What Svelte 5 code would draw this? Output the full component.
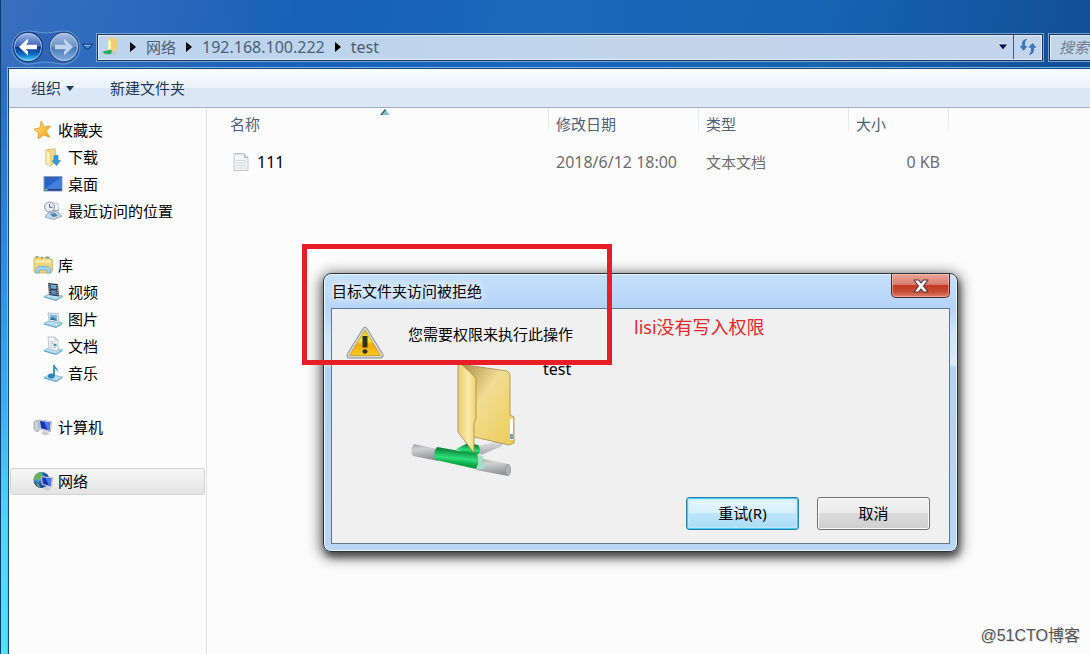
<script>
  const groups = [
    { icon: 'star', label: '收藏夹', items: [
      { icon: 'download', label: '下载' },
      { icon: 'desktop', label: '桌面' },
      { icon: 'recent', label: '最近访问的位置' }
    ] },
    { icon: 'library', label: '库', items: [
      { icon: 'video', label: '视频' },
      { icon: 'picture', label: '图片' },
      { icon: 'document', label: '文档' },
      { icon: 'music', label: '音乐' }
    ] },
    { icon: 'computer', label: '计算机', items: [] },
    { icon: 'network', label: '网络', items: [], selected: true }
  ];
  const crumbs = [{ label: '网络' }, { label: '192.168.100.222', latin: true }, { label: 'test', latin: true }];
  const files = [{ name: '111', date: '2018/6/12 18:00', type: '文本文档', size: '0 KB' }];
</script>

{#snippet tray()}
  <path d="M1 14.5 7 11.5 19.5 14 13 18Z" fill="#b9def0" stroke="#79b4d2" stroke-width=".8" />
  <path d="M1 14.5 13 18 19.5 14V15L13 19 1 15.5Z" fill="#5fa3c8" />
{/snippet}

{#snippet monitor()}
  <path d="M6 3 18.5 4.5 17.5 15 7 12Z" fill="#e3e8ee" stroke="#9aa4b4" stroke-width=".7" />
  <path d="M7 4 17.3 5.4 16.5 13.6 8 11.3Z" fill="#1732b4" />
  <path d="M11 4.6 17.3 5.4 16.5 13.6 14.5 13Z" fill="#5377e4" />
  <path d="M10 14 14 15 17 17 12 18.5 8 16.5Z" fill="#c6ccd4" />
{/snippet}

{#snippet icon(name)}
  <svg class="icon" viewBox="0 0 20 20" aria-hidden="true">
    {#if name === 'star'}
      <path d="M8.2 1 11 7.2 17.5 6 13.2 11.2 16.8 17.2 10.4 15 5.2 19 5.4 12.8 1 9.2 7 7.8Z" fill="url(#gold)" stroke="#e89a2c" stroke-width=".9" stroke-linejoin="round" />
    {:else if name === 'download'}
      <path d="M3 3 12 1.5 13.5 15 9 18 3 17Z" fill="#f0d88a" stroke="#c9a952" stroke-width=".6" />
      <path d="M3 3 7 5 8 19 3 17Z" fill="#fff1b8" stroke="#d4b860" stroke-width=".6" />
      <path d="M11 8.5H15V13.5H17.5L13.5 18.5 9.3 13.8H11Z" fill="#2f9be0" stroke="#2479bb" stroke-width=".6" />
    {:else if name === 'desktop'}
      <rect x="1" y="2.5" width="18" height="14.5" fill="#2b62c8" stroke="#8aa0bd" />
      <path d="M1.5 15 18.5 3V15Z" fill="#4f8ae6" opacity=".7" />
      <path d="M1.5 15H18.5V16.5H1.5Z" fill="#1c3f86" />
      <rect x="1.5" y="15" width="3" height="1.5" fill="#6dc37e" />
    {:else if name === 'recent'}
      <path d="M7 1.5 15 2.5 16 13 8 13Z" fill="#eef2f6" stroke="#a8b5c2" stroke-width=".7" />
      <circle cx="6.5" cy="6" r="5" fill="#e7edf2" stroke="#8798a8" />
      <path d="M6.5 3V6.3H9.5" fill="none" stroke="#4e6980" />
      <path d="M5 12 13 10.5 19 15 11 18.5 2 16Z" fill="#c6dcea" stroke="#6d8fa8" stroke-width=".7" />
      <path d="M7 13 12 12 15 15 10 16Z" fill="#4b83a4" />
      <path d="M10 10 16 9" stroke="#8ba0b0" />
    {:else if name === 'library'}
      <path d="M1 4 2 2H6L7 3H11L12 2H16L17 4 19.5 4.5V16L18 18H2L1 16Z" fill="#ecd57c" stroke="#c9aa50" stroke-width=".7" />
      <path d="M2 5H18V8H2Z" fill="#f6e8a6" />
      <path d="M3 2H5" stroke="#5cac4e" stroke-width="1.5" /><path d="M8 2.5H9.5" stroke="#ce5140" stroke-width="1.5" /><path d="M13 2.5H16" stroke="#4d9bce" stroke-width="1.5" />
      <path d="M3 18V13.5L5.5 11.5H15L17.5 13.5V18H14V15H6.5V18Z" fill="#9fd3ea" stroke="#6ca8c4" stroke-width=".7" />
    {:else if name === 'video'}
      {@render tray()}
      <path d="M5 1 15 2 16 14.5 6 13Z" fill="#333b48" />
      <path d="M7.5 2.5 13 3 13.3 7 7.8 6.5Z" fill="#6caadd" /><path d="M8 8 13.4 8.5 13.7 13 8.3 12.3Z" fill="#5689b8" />
      <path d="M6 2 7 13M14 3 15 14" stroke="#dce4e9" stroke-dasharray="1 1.3" />
    {:else if name === 'picture'}
      {@render tray()}
      <path d="M5 4 15 4.5 16 13.5 6 12Z" fill="#eff7fc" stroke="#85a9bf" stroke-width=".7" />
      <path d="M6.5 5.5 13.8 6 14.4 11.8 7.2 10.7Z" fill="#76b6dc" /><path d="M7 9.5 10 8 14.4 11.8 7.2 10.7Z" fill="#356f99" />
    {:else if name === 'document'}
      {@render tray()}
      <path d="M5 1H12L15 4V15L6 13Z" fill="#f6f9fb" stroke="#a2afbb" stroke-width=".7" />
      <path d="M12 1V4H15" fill="#dbe5ec" stroke="#a2afbb" stroke-width=".6" />
      <path d="M7 5 12 6M7 7 10 7.5M7 9 9 9.4M7 11 13 12" stroke="#a3b6c6" stroke-width=".8" /><path d="M10.5 7.5 13.5 8V10.5L10.5 10Z" fill="#5789b8" />
    {:else if name === 'music'}
      {@render tray()}
      <path d="M11 2V13" stroke="#2977a8" stroke-width="1.6" /><path d="M11 1C11.5 4 16 5 14.5 9 14 6.5 12.5 6 11 5.5Z" fill="#3794ca" />
      <ellipse cx="8.3" cy="13" rx="3.4" ry="2.5" fill="#2985be" />
    {:else if name === 'computer'}
      <path d="M1 5 3 3.5 6 4V14L3 14.5 1 12Z" fill="#cbd2da" stroke="#8d98a4" stroke-width=".7" />
      {@render monitor()}
    {:else}
      <circle cx="8.5" cy="9" r="8" fill="url(#globe)" />
      <path d="M3 4C5 1.5 8 1 10 1.5L8 4 9 6 6 9 3 8 1 10C.8 7 1.5 5.5 3 4ZM3 12 6 13 7 16.5C5 16 3.5 14 3 12Z" fill="#64b34e" />
      <g transform="translate(2.5 2.5) scale(.92)">{@render monitor()}</g>
    {/if}
  </svg>
{/snippet}

<svg class="defs" aria-hidden="true">
  <defs>
    <linearGradient id="gold" x2="1" y2="1"><stop stop-color="#fff0a0" /><stop offset=".5" stop-color="#fbc544" /><stop offset="1" stop-color="#f39a2e" /></linearGradient>
    <radialGradient id="globe" cx=".3" cy=".3"><stop stop-color="#a6e0f2" /><stop offset=".6" stop-color="#3784c5" /><stop offset="1" stop-color="#1c4b96" /></radialGradient>
    <linearGradient id="back" x2="0" y2="1"><stop stop-color="#a5bce8" /><stop offset=".48" stop-color="#3b62b8" /><stop offset=".5" stop-color="#0b3586" /><stop offset=".75" stop-color="#0c6cc4" /><stop offset="1" stop-color="#4be0fb" /></linearGradient>
    <linearGradient id="forward" x2="0" y2="1"><stop stop-color="#a9bfe0" /><stop offset=".5" stop-color="#6b91c7" /><stop offset=".52" stop-color="#4a78b8" /><stop offset="1" stop-color="#82b0e2" /></linearGradient>
    <linearGradient id="leaf" x2="1" y2="0"><stop stop-color="#e9cb73" /><stop offset=".6" stop-color="#fcebaa" /><stop offset="1" stop-color="#ecd06f" /></linearGradient>
    <linearGradient id="folder" x2="1" y2="1"><stop stop-color="#a78d48" /><stop offset=".2" stop-color="#c9b068" /><stop offset=".42" stop-color="#f1dc93" /><stop offset="1" stop-color="#eccd57" /></linearGradient>
    <linearGradient id="pipe" x2=".2" y2="1"><stop stop-color="#9fa2a5" /><stop offset=".35" stop-color="#cfd1d3" /><stop offset="1" stop-color="#909396" /></linearGradient>
    <linearGradient id="green" x2="-.2" y2="1"><stop stop-color="#087c35" /><stop offset=".4" stop-color="#2fe07a" /><stop offset=".6" stop-color="#0cae4a" /><stop offset="1" stop-color="#046d2b" /></linearGradient>
    <linearGradient id="warn" x2="0" y2="1"><stop stop-color="#d8c636" /><stop offset=".4" stop-color="#f8ec3c" /><stop offset=".58" stop-color="#f0a90e" /><stop offset="1" stop-color="#fbcb20" /></linearGradient>
  </defs>
</svg>

<div class="window">
  <header>
    <div class="history">
      <svg class="pill" viewBox="0 0 68 34" aria-hidden="true"><path d="M17 1C24 1 27 3 34 3S44 1 51 1A16 16 0 0 1 51 33C44 33 41 31 34 31S24 33 17 33A16 16 0 0 1 17 1Z" fill="#2a5eae" fill-opacity=".5" stroke="#8db5e6" stroke-opacity=".6" /></svg>
      <button aria-label="后退"><svg viewBox="0 0 32 32"><circle cx="16" cy="16" r="14.6" fill="url(#back)" stroke="#173a78" stroke-width="1.2" /><circle cx="16" cy="16" r="13.6" fill="none" stroke="#c6dcf8" stroke-opacity=".7" /><path d="M16 7.5 7 16 16 24.500V20.500L13.800 18.200H25V13.800H13.800L16 11.500Z" fill="#fff" /></svg></button>
      <button aria-label="前进"><svg viewBox="0 0 32 32"><circle cx="16" cy="16" r="14.6" fill="url(#forward)" stroke="#2b4e87" stroke-width="1.2" /><circle cx="16" cy="16" r="13.6" fill="none" stroke="#c9daf0" stroke-opacity=".7" /><path d="M16 7.500 25 16 16 24.500V20.500L18.200 18.200H7V13.800H18.200L16 11.500Z" fill="#bfd3ec" /></svg></button>
      <button class="pages" aria-label="最近的页面"><svg viewBox="0 0 12 8"><path d="M1 1.5H11L7.5 6.5H4.5Z" fill="#3d8adb" stroke="#123a78" stroke-width="1.2" /><path d="M2 2.5H10" stroke="#8fc1f4" /></svg></button>
    </div>
    <nav class="address" aria-label="地址">
      <svg class="place" viewBox="0 0 20 20" aria-hidden="true"><path d="M8 2 11 0 17 2V14L11 15 8 13Z" fill="#e9d17a" /><path d="M8 2 11 4V15L8 13Z" fill="#fff0b4" /><path d="M1 15 6 14 12 13.5 17 17 15 18.5 11 17 4 17.5Z" fill="#bfc6cc" /><path d="M3 14.5 11 12.5 12 15 10 17.5 4 16.5Z" fill="#22ac57" /></svg>
      {#each crumbs as crumb}
        <svg class="sep" viewBox="0 0 6 10" aria-hidden="true"><path d="M0 0 6 5 0 10Z" /></svg>
        <a href="#top" class:latin={crumb.latin}>{crumb.label}</a>
      {/each}
      <button class="drop" aria-label="历史记录"><svg viewBox="0 0 12 8"><path d="M1 1H11L6 7Z" fill="#081050" stroke="#f2f7fc" stroke-width=".8" /></svg></button>
      <button class="refresh" aria-label="刷新"><svg viewBox="0 0 18 16"><path d="M7.500 .5C4 1 2.800 4 3 7H.5L5 12 9.500 7H7C6.500 4.500 6.500 3 9 1Z" fill="#3c78b6" stroke="#eef5fb" stroke-width=".6" /><path d="M10.500 15.500C14 15 15.200 12 15 9H17.500L13 4 8.500 9H11C11.500 11.500 11.500 13 9 15Z" fill="#3c78b6" stroke="#eef5fb" stroke-width=".6" /></svg></button>
    </nav>
    <input class="search" type="text" placeholder="搜索" aria-label="搜索" />
  </header>

  <div class="client">
    <div class="toolbar">
      <button>组织 <svg viewBox="0 0 8 5" aria-hidden="true"><path d="M0 0H8L4 5Z" fill="#1e395b" /></svg></button>
      <button>新建文件夹</button>
    </div>
    <div class="body">
      <aside>
        {#each groups as group}
          <ul>
            <li><a href="#top" class:selected={group.selected}>{@render icon(group.icon)}{group.label}</a></li>
            {#each group.items as item}
              <li><a href="#top" class="child">{@render icon(item.icon)}{item.label}</a></li>
            {/each}
          </ul>
        {/each}
      </aside>
      <main>
        <table>
          <colgroup><col class="c-name" /><col class="c-mid" /><col class="c-mid" /><col class="c-size" /></colgroup>
          <thead>
            <tr>
              <th class="name">名称<svg class="sort" viewBox="0 0 10 6" aria-hidden="true"><path d="M0 6 5 0 10 6Z" fill="#8fc0d6" /><path d="M0 6 5 0 6 1.2 2 6Z" fill="#3b657c" /></svg></th>
              <th>修改日期</th><th>类型</th><th>大小</th>
            </tr>
          </thead>
          <tbody>
            {#each files as file}
              <tr>
                <td class="name latin"><span>
                  <svg viewBox="0 0 16 20" aria-hidden="true"><path d="M1 2H11.5L15 5.5V18.5H1Z" fill="#f1f3f4" stroke="#c3c7ca" /><path d="M11.5 2V5.5H15" fill="#d9dde0" stroke="#9fa6ab" stroke-width=".8" /><path d="M2 1.5H11" stroke="#a0a4a8" stroke-dasharray="1 1.2" /><path d="M3 8.5H13M3 11H13M3 13.5H13M3 16H13" stroke="#d0dde3" /></svg>
                  {file.name}</span></td>
                <td class="latin">{file.date}</td><td>{file.type}</td><td class="size latin">{file.size}</td>
              </tr>
            {/each}
          </tbody>
        </table>
      </main>
    </div>
  </div>

  <div class="dialog" role="dialog" aria-labelledby="dialog-title">
    <div class="title">
      <h1 id="dialog-title">目标文件夹访问被拒绝</h1>
      <button class="close" aria-label="关闭"><svg viewBox="0 0 16 14"><path d="M1 1H5.5L8 4 10.5 1H15L10.5 7 15 13H10.5L8 10 5.5 13H1L5.5 7Z" fill="#f7f7f7" stroke="#4c3a48" stroke-width="1.1" stroke-linejoin="round" /></svg></button>
    </div>
    <div class="panel">
      <div class="message">
        <svg viewBox="0 0 40 34" aria-hidden="true"><path d="M18 3Q20 0 22 3L38 29Q39 32 36 32.500H4Q1 32 2 29Z" fill="#d5d6d8" stroke="#898c90" /><path d="M20 4.500 35.500 30H4.500Z" fill="url(#warn)" stroke="#d19a16" stroke-width=".8" stroke-linejoin="round" /><path d="M17.500 10.500H22.500V22H17.500Z" fill="#32311d" /><ellipse cx="20" cy="26" rx="2.500" ry="2.200" fill="#32311d" /></svg>
        <p>您需要权限来执行此操作</p>
      </div>
      <div class="subject">
        <svg viewBox="0 0 110 118" aria-hidden="true">
          <path d="M69 85 96 79 94 85 73 94Z" fill="url(#pipe)" opacity=".8" />
          <path d="M6 83 30 88V100L5 95Q1 89 6 83Z" fill="url(#pipe)" />
          <path d="M70 97 101 103Q104 109 100 115L68 109Z" fill="url(#pipe)" />
          <ellipse cx="100" cy="109" rx="2.500" ry="5.500" fill="#b2b5b7" stroke="#8e9194" stroke-width=".8" />
          <path d="M48 88 60 82 70 84Q74 89 71 93L66 95Z" fill="url(#green)" />
          <path d="M29 86 69 93Q74 100 68 108L28 99Q24 92 29 86Z" fill="url(#green)" />
          <path d="M69 93 76 96 74 100 78 103 75 108 68 108Q72 101 69 93Z" fill="#a7dcc6" />
          <path d="M51 3 99 10Q102 11 102 15V54L106 56V82L101 84 62 75Z" fill="url(#folder)" stroke="#a58b3e" stroke-width=".8" />
          <path d="M102 58H105V79H102Z" fill="#fff" /><path d="M102 73H105V78H102Z" fill="#7e9eae" />
          <path d="M50 0 68 17V58L66 62V92L50 71Z" fill="url(#leaf)" stroke="#a58b3e" stroke-width=".8" />
        </svg>
        <p class="latin">test</p>
      </div>
      <div class="actions">
        <button class="primary">重试(R)</button>
        <button>取消</button>
      </div>
    </div>
  </div>

  <div class="mark"></div>
  <p class="note">lisi没有写入权限</p>
  <p class="watermark">@51CTO博客</p>
</div>

<style>
  :global(body) { margin: 0; }
  * { box-sizing: border-box; }
  p, h1, ul { margin: 0; padding: 0; font-size: inherit; font-weight: normal; }
  ul { list-style: none; }
  svg { display: block; flex: none; }
  button { padding: 0; border: 0; background: none; font: inherit; color: inherit; }
  a { color: inherit; text-decoration: none; }
  .defs { position: absolute; width: 0; height: 0; }
  .window {
    position: relative; display: flex; flex-direction: column; min-height: 100vh; overflow: hidden;
    font: 15px/20px "Noto Sans", "Noto Sans CJK SC", sans-serif; color: #000;
    border-left: 1px solid #0d3d6d;
    background: linear-gradient(180deg, #2765b7 0, #2c70c4 110px, #2e86dc 240px, #39aef3 400px, #4fd5f7 520px, #4fe3f5 100%);
  }
  .latin { font-size: 16px; }
  header {
    display: flex; align-items: center; height: 68px; padding: 26px 0 0 11px;
    background: linear-gradient(100deg, #376fbd 0, #2d69bc 12%, #1761b9 28%, #1b68bc 50%, #1663b2 75%, #124f97 100%);
  }
  .history { position: relative; display: flex; align-items: center; gap: 4px; width: 85px; }
  .history button { position: relative; width: 32px; }
  .history .pages { width: 11px; margin-left: -2px; }
  .pill { position: absolute; left: -1px; width: 70px; }
  .address {
    flex: 1; display: flex; align-items: center; height: 27px; padding: 0 0 1px 2px; color: #4c5f75;
    border: 1px solid #16365e; outline: 1px solid #7ba6d4; box-shadow: inset 0 0 0 1px #e2edf8;
    background: linear-gradient(90deg, #bcd4ee, #c2d5eb 60%, #c2d5ed);
  }
  .place { width: 20px; }
  .sep { width: 6px; margin: 0 10px; }
  .drop { margin-left: auto; padding-right: 4px; }
  .drop svg { width: 12px; }
  .refresh { display: grid; place-items: center; align-self: stretch; width: 29px; border-left: 1px solid #3d5877; }
  .refresh svg { width: 20px; }
  .search {
    flex: none; width: 60px; height: 27px; margin: 0 -19px 0 6px; padding: 0 0 0 9px; font: inherit; font-style: italic;
    border: 1px solid #16365e; border-radius: 0; outline: 1px solid #7ba6d4; box-shadow: inset 1px 1px 0 #e2edf8; background: #c4d6ec;
  }
  .search::placeholder { color: #727f90; opacity: 1; }
  .client { flex: 1; display: flex; flex-direction: column; margin-left: 7px; border: solid #14477f; border-width: 1px 0 0 1px; outline: 1px solid #7cb5e6; background: #fcfcfc; }
  .toolbar {
    display: flex; gap: 36px; height: 39px; padding-left: 22px; color: #1e395b; border-bottom: 1px solid #a0afc3;
    background: linear-gradient(#fafdff 0, #e9f2fb 50%, #dce7f5 51%, #dce7f5 100%);
  }
  .toolbar button { display: flex; align-items: center; gap: 5px; }
  .toolbar svg { width: 8px; }
  .body { flex: 1; display: flex; }
  aside { display: flex; flex-direction: column; gap: 27px; flex: 0 0 198px; padding: 9px 1px; border-right: 1px solid #d9e4f1; }
  aside a { display: flex; align-items: center; gap: 5px; height: 27px; padding: 0 0 2px 22px; border: 1px solid transparent; border-radius: 3px; }
  aside .child { padding-left: 32px; }
  aside .selected { border-color: #d3d3d3; background: linear-gradient(#f7f7f7, #e3e3e3); }
  .icon { width: 20px; }
  main { flex: 1; min-width: 0; }
  table { table-layout: fixed; width: 742px; border-collapse: collapse; color: #6d6d6d; }
  .c-name { width: 342px; } .c-mid { width: 150px; } .c-size { width: 100px; }
  th {
    position: relative; height: 31px; padding: 0 0 0 7px; text-align: left; font-weight: normal; color: #4c607a;
    background: linear-gradient(#dce6f2, #e3ebf5 60%, #fcfcfc) right top / 1px 28px no-repeat;
  }
  td { height: 45px; padding: 0 0 0 7px; }
  .name { padding-left: 23px; }
  td.name { padding-left: 26px; color: #000; }
  td span { display: flex; align-items: center; gap: 8px; }
  td svg { width: 16px; }
  td.size { padding: 0 9px 0 0; text-align: right; }
  .sort { position: absolute; left: 50%; top: 1px; width: 10px; margin-left: 2px; }

  .dialog {
    position: absolute; left: 322px; top: 273px; width: 635px; padding: 0 7px 7px; border: 1px solid #28313c; border-radius: 8px;
    background: linear-gradient(180deg, #c5e0fb 0, #b4d4f8 34px, #cfe4fa 60px, #d8eafb 90px, #b2d2f3 94px, #b9d7f5 100%);
    box-shadow: inset 0 0 0 1px #ecf6ff, 0 3px 14px 2px rgba(0, 0, 0, .65), 2px 5px 6px rgba(0, 0, 0, .4);
  }
  .title { display: flex; justify-content: space-between; height: 34px; padding-left: 1px; }
  h1 { line-height: 34px; text-shadow: 0 0 8px #fff, 0 0 12px #fff; }
  .close {
    display: grid; place-items: center; width: 59px; height: 24px; border: 1px solid #4b2731; border-top: 0; border-radius: 0 0 5px 5px;
    background: linear-gradient(#e9a597 0, #d97f70 45%, #c03c25 50%, #c84832 75%, #dd8068 100%); box-shadow: inset 0 0 0 1px rgba(255, 210, 200, .5);
  }
  .close svg { width: 16px; }
  .panel { padding: 15px 19px 13px 13px; border: 1px solid #5f7890; background: #f0f0f0; }
  .message { display: flex; gap: 23px; height: 37px; }
  .message svg { width: 40px; }
  .subject { display: flex; gap: 25px; padding-left: 63px; }
  .subject svg { width: 110px; }
  .subject p { line-height: 16px; }
  .actions { display: flex; justify-content: flex-end; gap: 18px; padding-top: 18px; }
  .actions button {
    width: 113px; height: 33px; padding-bottom: 2px; border: 1px solid #707070; border-radius: 3px; box-shadow: inset 0 0 0 1px #fafafa;
    background: linear-gradient(#f2f2f2 0, #ebebeb 49%, #dadada 50%, #cfcfcf 100%);
  }
  .actions .primary { border-color: #2c7fa6; box-shadow: inset 0 0 0 1px #48cdf2, inset 0 0 2px 2px #b8ecfb; background: linear-gradient(#e9f6fd 0, #d6effb 49%, #bde6fc 50%, #a9dbf4 100%); }
  .mark { position: absolute; left: 301px; top: 244px; width: 310px; height: 121px; border: 5px solid #e91d25; }
  .note { position: absolute; left: 633px; top: 317px; font-size: 18px; color: #e9262b; }
  .watermark { position: absolute; right: 10px; bottom: 8px; font: 16px/20px "Liberation Sans", "Noto Sans CJK SC", sans-serif; color: #555; text-shadow: 1px 1px 0 #ddd; }
</style>
